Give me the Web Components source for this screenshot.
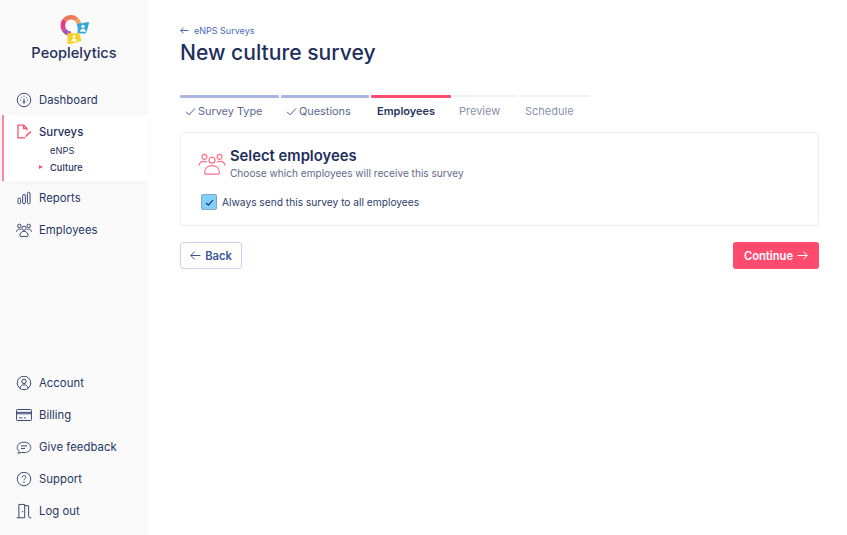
<!DOCTYPE html>
<html lang="en">
<head>
<meta charset="utf-8">
<title>New culture survey</title>
<style>
    html, body { margin: 0; height: 100%; background: #fff; font-family: Inter, "Liberation Sans", sans-serif; }
    body { display: flex; height: 535px; overflow: hidden; }
</style>
</head>
<body>
<side-bar>
    <brand-logo></brand-logo>
    <nav-item label="Dashboard" icon="gauge"></nav-item>
    <nav-group label="Surveys">
        <sub-item label="eNPS"></sub-item>
        <sub-item label="Culture" active></sub-item>
    </nav-group>
    <nav-item label="Reports" icon="bars"></nav-item>
    <nav-item label="Employees" icon="people"></nav-item>
    <nav-item slot="bottom" label="Account" icon="user"></nav-item>
    <nav-item slot="bottom" label="Billing" icon="card"></nav-item>
    <nav-item slot="bottom" label="Give feedback" icon="chat"></nav-item>
    <nav-item slot="bottom" label="Support" icon="help"></nav-item>
    <nav-item slot="bottom" label="Log out" icon="door"></nav-item>
</side-bar>
<main-area>
    <page-head back="eNPS Surveys" title="New culture survey"></page-head>
    <step-bar>
        <step-item label="Survey Type" state="done" style="width:99px"></step-item>
        <step-item label="Questions" state="done" style="width:88px"></step-item>
        <step-item label="Employees" state="current" style="width:80px"></step-item>
        <step-item label="Preview" style="width:64px"></step-item>
        <step-item label="Schedule" style="width:71px"></step-item>
    </step-bar>
    <select-card></select-card>
    <form-actions></form-actions>
</main-area>

<script>
    const ICONS = {
        gauge: '<circle cx="9" cy="9" r="7.6"/><path d="M9 4.2v1.2M4.6 9h1.2M12.2 9h1.2M5.9 5.9l.8.8M12.1 5.9l-.8.8M9 7.5v3.2"/><circle cx="9" cy="11.6" r="1"/>',
        bars: '<rect x="2.2" y="9" width="3" height="6.5" rx="1.5"/><rect x="7.5" y="5" width="3" height="10.5" rx="1.5"/><rect x="12.8" y="2.5" width="3" height="13" rx="1.5"/>',
        people: '<circle cx="3.8" cy="4.4" r="2"/><circle cx="14.2" cy="4.4" r="2"/><circle cx="9" cy="7" r="2.3"/><path d="M.6 11c.3-2 1.5-3 3.2-3 .8 0 1.4.2 1.9.6M17.4 11c-.3-2-1.5-3-3.2-3-.8 0-1.4.2-1.9.6M4.4 15.5c0-3 1.8-5 4.6-5s4.6 2 4.6 5c0 .6-.5.9-1 .9H5.4c-.5 0-1-.3-1-.9z"/>',
        user: '<circle cx="9" cy="9" r="7.6"/><circle cx="9" cy="7.2" r="2.5"/><path d="M4.4 14.6c.6-2.4 2.3-3.6 4.6-3.6s4 1.2 4.6 3.6"/>',
        card: '<rect x=".6" y="2.8" width="16.8" height="12.4" rx="1"/><path d="M.6 6h16.8M.6 7.6h16.8M3.4 12.2h4M9 12.2h2"/>',
        chat: '<path d="M2 15.8c.9-.4 1.5-1 1.8-1.7C2.3 12.9 1.4 11.2 1.4 9.6c0-3.5 3.3-6 7.6-6s7.6 2.5 7.6 6-3.3 5.8-7.6 5.8c-.9 0-1.7-.1-2.5-.3-1.1.6-2.6.8-4.5.7z"/><path d="M5.6 7.7h6.8M5.6 10.6h4.6"/>',
        help: '<circle cx="9" cy="9" r="7.6"/><path d="M6.9 7.2c0-1.2.9-2 2.1-2s2.1.8 2.1 1.9c0 1.6-2.1 1.6-2.1 3.3"/><circle cx="9" cy="12.6" r=".4"/>',
        door: '<path d="M.8 16.6h2.4V1.6h6.6v15M3.2 16.6h6.6M9.8 3h4.4v12c0 .9.6 1.6 1.4 1.6h1.6"/><path d="M7.4 9v1.4"/>'
    };

    class SideBar extends HTMLElement {
        constructor() {
            super();
            this.attachShadow({mode: 'open'}).innerHTML = `
                <style>
                    :host { display: flex; flex-direction: column; flex: none; box-sizing: border-box;
                        width: 148px; height: 535px; background: #fafafb; padding-bottom: 9px; }
                    .spacer { flex: 1; }
                </style>
                <slot></slot>
                <div class="spacer"></div>
                <slot name="bottom"></slot>`;
        }
    }

    class BrandLogo extends HTMLElement {
        constructor() {
            super();
            this.attachShadow({mode: 'open'}).innerHTML = `
                <style>
                    :host { display: flex; flex-direction: column; align-items: center; box-sizing: border-box; height: 83px; padding-top: 15px; }
                    svg { display: block; width: 30px; height: 30px; }
                    span { font: 500 14.6px/18px Inter, sans-serif; color: #1f2f5c; margin-top: -1px; }
                </style>
                <svg viewBox="0 0 30 30">
                    <g fill="none" stroke-width="4.6" transform="rotate(90 12 10.5)">
                        <circle cx="12" cy="10.5" r="8.2" pathLength="360" stroke="#a94fc0" stroke-dasharray="60 300"/>
                        <circle cx="12" cy="10.5" r="8.2" pathLength="360" stroke="#e23a8a" stroke-dasharray="70 290" stroke-dashoffset="-60"/>
                        <circle cx="12" cy="10.5" r="8.2" pathLength="360" stroke="#ee7a5c" stroke-dasharray="90 270" stroke-dashoffset="-130"/>
                        <circle cx="12" cy="10.5" r="8.2" pathLength="360" stroke="#f2a25e" stroke-dasharray="40 320" stroke-dashoffset="-220"/>
                    </g>
                    <path d="M17.6 9L30 7C29.6 11 28.2 15.4 26.6 18.6L18 18.6C19.2 15.4 19 12 17.6 9Z" fill="#2fa8dc"/>
                    <circle cx="24" cy="11.4" r="1.7" fill="#fff"/>
                    <path d="M21 16.8c.2-2 1.5-3 3-3s2.8 1 3 3z" fill="#fff"/>
                    <path d="M8.6 17.4C12 18.6 16 18.6 19.8 17.4L22.6 25.4C18 27.6 13 28.6 8.4 29Z" fill="#f7d127"/>
                    <circle cx="15" cy="21.4" r="1.5" fill="#fff"/>
                    <path d="M12.4 26.6c.2-2 1.2-3.2 2.6-3.2s2.4 1.2 2.6 3z" fill="#fff"/>
                </svg>
                <span>Peoplelytics</span>`;
        }
    }

    class NavItem extends HTMLElement {
        constructor() {
            super();
            this.attachShadow({mode: 'open'}).innerHTML = `
                <style>
                    :host { display: flex; align-items: center; gap: 7px; box-sizing: border-box; height: 32px; padding: 2px 0 0 16px; }
                    svg { width: 16px; height: 16px; flex: none; fill: none; stroke: #2d3c68; stroke-width: 1.05; }
                    span { font: 400 11.3px Inter, sans-serif; color: #26365f; letter-spacing: .05px; }
                </style>
                <svg viewBox="0 0 18 18">${ICONS[this.getAttribute('icon')] || ''}</svg>
                <span>${this.getAttribute('label')}</span>`;
        }
    }

    class NavGroup extends HTMLElement {
        constructor() {
            super();
            this.attachShadow({mode: 'open'}).innerHTML = `
                <style>
                    :host { display: block; box-sizing: border-box; height: 66px; margin-left: 2px; background: #fff;
                        border-left: 2px solid #ff8aa0; padding-top: 6px; box-shadow: 0 1px 6px rgba(30,40,80,.04); }
                    .head { display: flex; align-items: center; height: 21px; padding-left: 12px; gap: 7px; }
                    svg { width: 16px; height: 16px; fill: none; stroke: #ff4b6e; stroke-width: 1.4; flex: none; }
                    span { font: 500 11.3px Inter, sans-serif; color: #1f2f5c; letter-spacing: .05px; }
                    ::slotted(sub-item) { margin-left: 32px; }
                </style>
                <div class="head">
                    <svg viewBox="0 0 18 18">
                        <path d="M12.4 7.2V5L8.8 1.4H2.2v14.2h8.2"/>
                        <path d="M8.6 1.6v3.6h3.6"/>
                        <path d="M10.8 13l5.4-5.2 1.2 1.2-5.4 5.2-1.9.6z" fill="#ff4b6e" stroke="none"/>
                    </svg>
                    <span>${this.getAttribute('label')}</span>
                </div>
                <slot></slot>`;
        }
    }

    class SubItem extends HTMLElement {
        constructor() {
            super();
            const active = this.hasAttribute('active');
            this.attachShadow({mode: 'open'}).innerHTML = `
                <style>
                    :host { display: flex; align-items: center; height: 17px; position: relative; padding-left: 14px; }
                    span { font: ${active ? 500 : 400} 9.2px Inter, sans-serif; color: #1f2f5c; letter-spacing: .1px; }
                    i { position: absolute; left: 3px; top: 6px; width: 0; height: 0;
                        border-left: 4px solid #ff4b6e; border-top: 2.5px solid transparent; border-bottom: 2.5px solid transparent; }
                </style>
                ${active ? '<i></i>' : ''}<span>${this.getAttribute('label')}</span>`;
        }
    }

    class MainArea extends HTMLElement {
        constructor() {
            super();
            this.attachShadow({mode: 'open'}).innerHTML = `
                <style>
                    :host { display: flex; flex-direction: column; flex: none; box-sizing: border-box; width: 699px; padding: 24px 28px 0 32px; }
                </style>
                <slot></slot>`;
        }
    }

    class PageHead extends HTMLElement {
        constructor() {
            super();
            this.attachShadow({mode: 'open'}).innerHTML = `
                <style>
                    :host { display: block; height: 71px; }
                    .back { display: flex; align-items: center; gap: 5px; height: 12px; font: 400 9px Inter, sans-serif; color: #4a69bd; }
                    svg { width: 9px; height: 9px; fill: none; stroke: #4a69bd; stroke-width: 1; }
                    h1 { margin: 2px 0 0; font: 500 21.1px/30px Inter, sans-serif; color: #1f2f5c; }
                </style>
                <div class="back">
                    <svg viewBox="0 0 9 9"><path d="M8.5 4.5H.8M3.6 1.6L.8 4.5l2.8 2.9"/></svg>
                    <span>${this.getAttribute('back')}</span>
                </div>
                <h1>${this.getAttribute('title')}</h1>`;
        }
    }

    class StepBar extends HTMLElement {
        constructor() {
            super();
            this.attachShadow({mode: 'open'}).innerHTML = `
                <style>
                    :host { display: flex; gap: 2px; height: 37px; }
                </style>
                <slot></slot>`;
        }
    }

    class StepItem extends HTMLElement {
        constructor() {
            super();
            const state = this.getAttribute('state');
            this.attachShadow({mode: 'open'}).innerHTML = `
                <style>
                    :host { display: flex; flex-direction: column; flex: none; }
                    .bar { height: 3px; border-radius: 1px; background: #eef0f3; }
                    :host([state=done]) .bar { background: #a9b4e2; }
                    :host([state=current]) .bar { background: #ff4b6e; }
                    :host(:not([state])) .bar { height: 2px; margin-bottom: 1px; }
                    .label { display: flex; align-items: center; gap: 2px; height: 26px; padding-left: 5px; box-sizing: border-box;
                        font: 400 10.9px Inter, sans-serif; color: #8a93ad; white-space: nowrap; }
                    :host([state=done]) .label { color: #5c6a8e; }
                    :host([state=current]) .label { color: #26365f; font-weight: 600; font-size: 11px; padding-left: 6px; }
                    :host(:not([state])) .label { padding-left: 6px; font-size: 11px; }
                    svg { width: 11px; height: 11px; fill: none; stroke: #4a5b8c; stroke-width: 1; }
                </style>
                <div class="bar"></div>
                <div class="label">
                    ${state === 'done' ? '<svg viewBox="0 0 11 11"><path d="M1 5.8l3 3 6-6.4"/></svg>' : ''}
                    <span>${this.getAttribute('label')}</span>
                </div>`;
        }
    }

    class SelectCard extends HTMLElement {
        constructor() {
            super();
            this.attachShadow({mode: 'open'}).innerHTML = `
                <style>
                    :host { display: block; box-sizing: border-box; height: 94px; border: 1px solid #eceef1; border-radius: 4px;
                        padding: 14px 17px 0; }
                    .top { display: flex; gap: 4px; align-items: center; }
                    .top svg { width: 28px; height: 24px; fill: none; stroke: #ff7089; stroke-width: 1.2; flex: none; }
                    h2 { margin: 0; font: 600 14.8px/19px Inter, sans-serif; color: #1f2f5c; }
                    p { margin: 0; font: 400 10.1px/15px Inter, sans-serif; color: #5f6b8a; }
                    label { display: flex; align-items: center; gap: 5px; margin-top: 13px; font: 400 10.2px Inter, sans-serif; color: #2d3c68; }
                    .box { display: flex; align-items: center; justify-content: center; width: 16px; height: 16px; margin-left: 3px;
                        box-sizing: border-box; border: 1px solid #8aa4c4; border-radius: 2px; background: #7fd0fb; }
                    .box svg { width: 9px; height: 9px; fill: none; stroke: #1f2f5c; stroke-width: 1.1; }
                </style>
                <div class="top">
                    <svg viewBox="0 0 28 24">
                        <circle cx="6.4" cy="4.8" r="2.5"/><circle cx="21.6" cy="4.8" r="2.5"/><circle cx="14" cy="8.2" r="3"/>
                        <path d="M1 13.6c.2-2.6 2.2-4.2 5.4-4.2 1 0 1.8.2 2.6.6M27 13.6c-.2-2.6-2.2-4.2-5.4-4.2-1 0-1.8.2-2.6.6"/>
                        <path d="M6.6 20.6c0-4.4 3-7 7.4-7s7.4 2.6 7.4 7c0 1-.6 1.6-1.6 1.6H8.2c-1 0-1.6-.6-1.6-1.6z"/>
                    </svg>
                    <div>
                        <h2>Select employees</h2>
                        <p>Choose which employees will receive this survey</p>
                    </div>
                </div>
                <label>
                    <span class="box"><svg viewBox="0 0 9 9"><path d="M1 4.8l2.4 2.4L8 2"/></svg></span>
                    <span>Always send this survey to all employees</span>
                </label>`;
        }
    }

    class FormActions extends HTMLElement {
        constructor() {
            super();
            this.attachShadow({mode: 'open'}).innerHTML = `
                <style>
                    :host { display: flex; justify-content: space-between; margin-top: 16px; }
                    button { display: flex; align-items: center; height: 26.5px; box-sizing: border-box; border-radius: 3px;
                        font: 600 11.2px Inter, sans-serif; padding: 1px 0 0; }
                    .back { width: 62px; justify-content: center; gap: 4px; background: #fff; border: 1px solid #c6d3ef; color: #3b5595; }
                    .next { width: 86px; justify-content: center; gap: 4px; background: #ff4b6e; border: 0; color: #fff; }
                    svg { width: 11px; height: 11px; fill: none; stroke: currentColor; stroke-width: 1; }
                </style>
                <button class="back"><svg viewBox="0 0 11 11"><path d="M10.4 5.5H.8M4.6 1.6L.8 5.5l3.8 3.9"/></svg>Back</button>
                <button class="next">Continue<svg viewBox="0 0 11 11"><path d="M.6 5.5h9.6M6.4 1.6l3.8 3.9-3.8 3.9"/></svg></button>`;
        }
    }

    customElements.define('side-bar', SideBar);
    customElements.define('brand-logo', BrandLogo);
    customElements.define('nav-item', NavItem);
    customElements.define('nav-group', NavGroup);
    customElements.define('sub-item', SubItem);
    customElements.define('main-area', MainArea);
    customElements.define('page-head', PageHead);
    customElements.define('step-bar', StepBar);
    customElements.define('step-item', StepItem);
    customElements.define('select-card', SelectCard);
    customElements.define('form-actions', FormActions);
</script>
</body>
</html>
